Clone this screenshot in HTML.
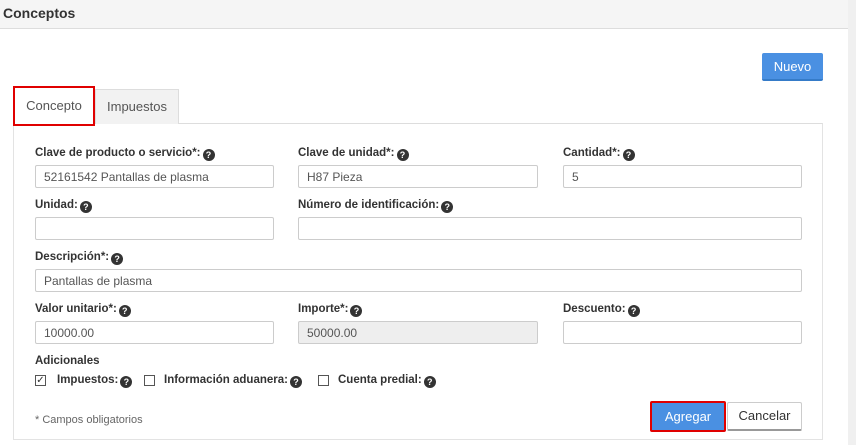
<!DOCTYPE html>
<html><head><meta charset="utf-8"><style>
*{box-sizing:border-box;margin:0;padding:0}
body{width:856px;height:445px;background:#fff;font-family:"Liberation Sans",sans-serif;color:#333;position:relative;overflow:hidden;font-size:12px}
.a{position:absolute}
.hdr{left:0;top:0;width:848px;height:29px;background:#f5f5f5;border-bottom:1px solid #ddd}
.hdr span{position:absolute;left:3px;top:5px;font-size:14px;font-weight:bold;color:#333}
.sb{left:848px;top:0;width:8px;height:445px;background:#f0f0f0}
.btn{position:absolute;border-radius:2px;font-size:13px;text-align:center}
.lbl{position:absolute;font-weight:bold;font-size:11.5px;color:#333;white-space:nowrap}
.q{display:inline-block;width:12px;height:12px;border-radius:50%;background:#333;color:#fff;font-size:9px;line-height:12px;text-align:center;vertical-align:-2px;margin-left:2px}
.in{position:absolute;height:23px;border:1px solid #ccc;border-radius:2px;padding:4px 8px;font-size:12px;color:#555;background:#fff}
.cb{position:absolute;top:375px;width:11px;height:11px;border:1px solid #555;font-size:10px;line-height:9px;text-align:center}
</style></head><body>
<div class="a hdr"><span>Conceptos</span></div>
<div class="a sb"></div>
<div class="btn" style="left:762px;top:53px;width:61px;height:28px;background:#4a90e2;color:#fff;line-height:28px;border-bottom:2px solid #357bc8">Nuevo</div>
<div class="a" style="left:13px;top:123px;width:810px;height:317px;border:1px solid #e3e3e3;border-top:1px solid #ddd"></div>
<div class="a" style="left:95px;top:89px;width:84px;height:35px;background:#f2f2f2;border:1px solid #ddd;border-bottom:none;color:#555;font-size:13px;text-align:center;line-height:34px">Impuestos</div>
<div class="a" style="left:13px;top:86px;width:82px;height:40px;background:#fff;border:2px solid #e00000;color:#555;font-size:13px;text-align:center;line-height:36px">Concepto</div>

<div class="lbl" style="left:35px;top:147px">Clave de producto o servicio*:<span class="q">?</span></div>
<div class="lbl" style="left:298px;top:147px">Clave de unidad*:<span class="q">?</span></div>
<div class="lbl" style="left:563px;top:147px">Cantidad*:<span class="q">?</span></div>
<div class="in" style="left:35px;top:165px;width:239px">52161542 Pantallas de plasma</div>
<div class="in" style="left:298px;top:165px;width:240px">H87 Pieza</div>
<div class="in" style="left:563px;top:165px;width:239px">5</div>

<div class="lbl" style="left:35px;top:199px">Unidad:<span class="q">?</span></div>
<div class="lbl" style="left:298px;top:199px">Número de identificación:<span class="q">?</span></div>
<div class="in" style="left:35px;top:217px;width:239px"></div>
<div class="in" style="left:298px;top:217px;width:504px"></div>

<div class="lbl" style="left:35px;top:251px">Descripción*:<span class="q">?</span></div>
<div class="in" style="left:35px;top:269px;width:767px">Pantallas de plasma</div>

<div class="lbl" style="left:35px;top:303px">Valor unitario*:<span class="q">?</span></div>
<div class="lbl" style="left:298px;top:303px">Importe*:<span class="q">?</span></div>
<div class="lbl" style="left:563px;top:303px">Descuento:<span class="q">?</span></div>
<div class="in" style="left:35px;top:321px;width:239px">10000.00</div>
<div class="in" style="left:298px;top:321px;width:240px;background:#eee">50000.00</div>
<div class="in" style="left:563px;top:321px;width:239px"></div>

<div class="lbl" style="left:35px;top:355px">Adicionales</div>
<div class="cb" style="left:35px">✓</div>
<div class="lbl" style="left:57px;top:374px">Impuestos:<span class="q">?</span></div>
<div class="cb" style="left:144px"></div>
<div class="lbl" style="left:164px;top:374px">Información aduanera:<span class="q">?</span></div>
<div class="cb" style="left:318px"></div>
<div class="lbl" style="left:338px;top:374px">Cuenta predial:<span class="q">?</span></div>

<div class="a" style="left:35px;top:414px;font-size:11px;color:#666">* Campos obligatorios</div>
<div class="btn" style="left:650px;top:401px;width:76px;height:31px;background:#4a90e2;color:#fff;line-height:27px;border:2px solid #e00000">Agregar</div>
<div class="btn" style="left:727px;top:402px;width:75px;height:29px;background:#fff;color:#333;line-height:26px;border:1px solid #ccc;border-bottom:2px solid #999">Cancelar</div>
</body></html>
